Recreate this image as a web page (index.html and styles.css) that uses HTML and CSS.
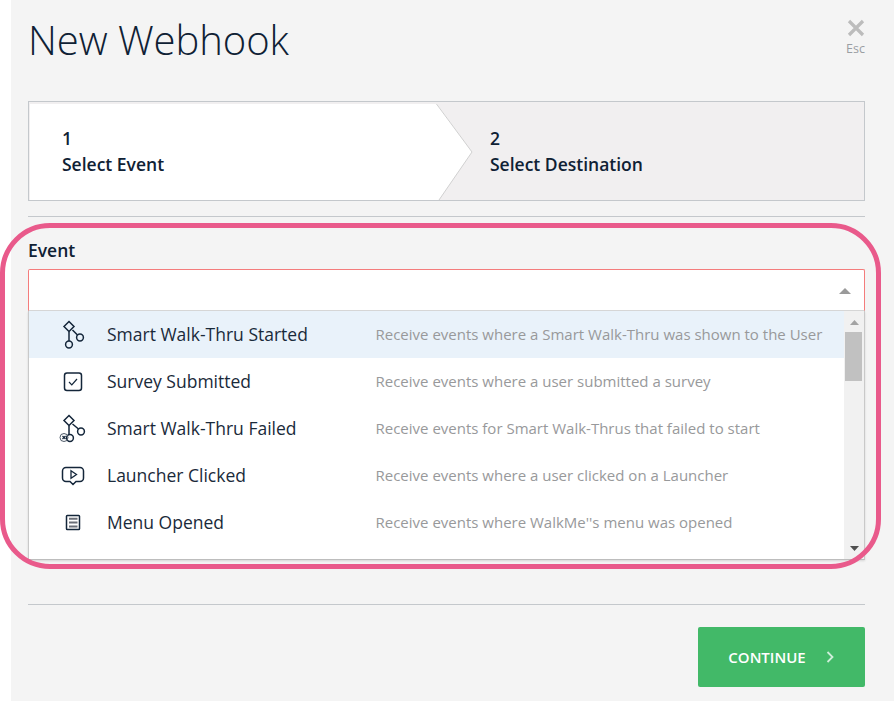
FILE: index.html
```html
<!DOCTYPE html>
<html lang="en">
<head>
<meta charset="utf-8">
<title>New Webhook</title>
<link rel="stylesheet" href="styles.css">
</head>
<body>
<main class="modal">
  <header class="head">
    <h1 class="title">New Webhook</h1>
    <button class="close" type="button">
      <svg class="close-x" width="18" height="18" viewBox="0 0 18 18"><path d="M2 2 16 16M16 2 2 16"/></svg>
      <span class="esc">Esc</span>
    </button>
  </header>

  <div class="stepper">
    <div class="step step-active"><span>1</span><span>Select Event</span></div>
    <svg class="chevron" width="38" height="96" viewBox="0 0 38 96" preserveAspectRatio="none"><path class="chev-fill" d="M0 0H1L36 48 3 96H0Z"/><path class="chev-line" d="M.5 0 36 48 3 96"/></svg>
    <div class="step step-next"><span>2</span><span>Select Destination</span></div>
  </div>

  <hr class="rule rule-top">

  <label class="field-label">Event</label>
  <div class="select">
    <svg class="caret" width="12" height="6" viewBox="0 0 12 6"><path d="M6 0 12 6H0Z"/></svg>
  </div>

  <div class="list">
    <ul class="rows">
      <li class="row row-hover">
        <svg class="icon" width="24" height="28" viewBox="0 0 24 28"><path d="M8 10.500V20M11.500 9 16.500 14"/><path d="M8 .5 13 5.500 8 10.500 3 5.500Z"/><circle cx="19" cy="16.500" r="3.400"/><circle cx="8" cy="23.500" r="3.400"/></svg>
        <span class="name">Smart Walk-Thru Started</span>
        <span class="desc">Receive events where a Smart Walk-Thru was shown to the User</span>
      </li>
      <li class="row">
        <svg class="icon" width="24" height="28" viewBox="0 0 24 28"><rect x="3.500" y="5" width="17" height="17.500" rx="2.500"/><path class="thin" d="M8 14 10.800 16.800 16 11"/></svg>
        <span class="name">Survey Submitted</span>
        <span class="desc">Receive events where a user submitted a survey</span>
      </li>
      <li class="row">
        <svg class="icon" width="24" height="28" viewBox="0 0 24 28"><path d="M8 10.500V20M11.500 9 17.500 14"/><path d="M8 .5 13 5.500 8 10.500 3 5.500Z"/><circle cx="20" cy="16.500" r="3.400"/><circle cx="9" cy="23" r="3.400"/><circle class="soft" cx="3" cy="22.500" r="4"/><path class="thin" d="M1.500 21 4.500 24M4.500 21 1.500 24"/></svg>
        <span class="name">Smart Walk-Thru Failed</span>
        <span class="desc">Receive events for Smart Walk-Thrus that failed to start</span>
      </li>
      <li class="row">
        <svg class="icon" width="24" height="28" viewBox="0 0 24 28"><path d="M5 5.500H19A3.500 3.500 0 0 1 22.500 9V16A3.500 3.500 0 0 1 19 19.500H15L12 22.500 9 19.500H5A3.500 3.500 0 0 1 1.500 16V9A3.500 3.500 0 0 1 5 5.500Z"/><path class="tri" d="M10 8.800 15.500 12.500 10 16.200Z"/></svg>
        <span class="name">Launcher Clicked</span>
        <span class="desc">Receive events where a user clicked on a Launcher</span>
      </li>
      <li class="row">
        <svg class="icon" width="24" height="28" viewBox="0 0 24 28"><rect x="5.500" y="6.500" width="13" height="14" rx=".8"/><path class="lines" d="M8 9.800H16.500M8 13.500H16.500M8 17.500H16.500"/></svg>
        <span class="name">Menu Opened</span>
        <span class="desc">Receive events where WalkMe''s menu was opened</span>
      </li>
    </ul>
    <div class="scrollbar">
      <svg class="sb-arrow" width="9" height="5" viewBox="0 0 9 5"><path d="M4.500 0 9 5H0Z"/></svg>
      <div class="sb-thumb"></div>
      <svg class="sb-arrow sb-down" width="9" height="5" viewBox="0 0 9 5"><path d="M0 0H9L4.500 5Z"/></svg>
    </div>
  </div>

  <hr class="rule rule-bottom">

  <div class="actions">
    <button class="continue" type="button">CONTINUE
      <svg width="9" height="12" viewBox="0 0 9 12"><path d="M1.500 1 6.500 6 1.500 11"/></svg>
    </button>
  </div>
</main>
<div class="highlight"></div>
</body>
</html>
```

FILE: styles.css
```css
* { box-sizing: border-box; }
html, body { margin: 0; height: 100%; }
body {
  background: #fff;
  padding-left: 11px;
  font-family: "Open Sans", sans-serif;
  color: #0f2134;
  overflow: hidden;
}
.modal {
  background: #f4f4f4;
  height: 701px;
  padding: 0 29px 0 17px;
}
.head {
  height: 101px;
  display: flex;
  justify-content: space-between;
  align-items: flex-start;
}
.title {
  margin: 12px 0 0;
  font-size: 40px;
  font-weight: 300;
  line-height: 56px;
  letter-spacing: -.05px;
}
.close {
  margin: 19px 0 0;
  padding: 0;
  border: 0;
  background: none;
  display: flex;
  flex-direction: column;
  align-items: center;
  font-family: inherit;
}
.close-x path { stroke: #bcbcbc; stroke-width: 3.200; fill: none; }
.esc { font-size: 12.500px; line-height: 16px; color: #9a9ea3; margin-top: 4px; }

.stepper {
  height: 100px;
  display: flex;
  border: 1px solid #c4c8cc;
  background: #f1eff0;
  font-size: 17.500px;
  font-weight: 580;
  line-height: 26px;
}
.step {
  display: flex;
  flex-direction: column;
  justify-content: center;
}
.step-active {
  width: 406px;
  padding: 0 0 2px 32px;
  background: #fff;
  margin: 2px 0 0 1px;
  height: 96px;
}
.chevron { flex: none; margin-top: 2px; height: 96px; }
.chev-fill { fill: #fff; }
.chev-line { fill: none; stroke: #d0d0d0; stroke-width: 1; }
.step-next { padding-left: 16px; }

.rule { border: 0; height: 1px; margin: 0; background: #c4c8cc; }
.rule-top { margin-top: 15px; }
.rule-bottom { margin-top: 44px; }

.field-label {
  display: block;
  font-size: 17.500px;
  font-weight: 580;
  line-height: 22px;
  margin-top: 22px;
}
.select {
  height: 42px;
  margin-top: 8px;
  background: #fff;
  border: 1px solid #f47c7c;
  border-bottom-color: #d8d8d8;
  border-radius: 2px 2px 0 0;
  display: flex;
  justify-content: flex-end;
  align-items: center;
  padding: 2px 13px 0 0;
}
.caret path { fill: #9a9a9a; }

.list {
  height: 249px;
  display: flex;
  background: #fff;
  border: 1px solid #c9c9c9;
  border-top: 0;
  border-bottom-color: #bdbdbd;
  box-shadow: 0 1px 2px rgba(0, 0, 0, .12);
}
.rows { flex: 1; list-style: none; margin: 0; padding: 0; min-width: 0; }
.row {
  height: 47px;
  display: flex;
  align-items: center;
  padding-left: 32px;
}
.row-hover { background: #e9f2fa; }
.icon { flex: none; width: 24px; height: 28px; margin-right: 22px; overflow: visible; }
.icon path, .icon rect, .icon circle { fill: none; stroke: #14263a; stroke-width: 1.500; }
.icon .thin { stroke-width: 1.200; }
.icon .tri { stroke-width: 1.300; }
.icon .soft { stroke: #4e5a68; stroke-width: 1; }
.icon .lines { stroke: #6b6f78; stroke-width: 2; }
.name { width: 269px; flex: none; margin-bottom: 2px; font-size: 17.500px; line-height: 24px; color: #1a2a3a; }
.desc { margin: 0 0 2px -.5px; font-size: 15px; color: #98999b; white-space: nowrap; }

.scrollbar {
  width: 20px;
  flex: none;
  background: #f1f1f1;
  display: flex;
  flex-direction: column;
  align-items: center;
}
.sb-arrow { margin-top: 9px; flex: none; }
.sb-arrow path { fill: #a3a3a3; }
.sb-thumb { width: 17px; height: 49px; background: #c1c1c1; margin: 7px 1px 0 0; }
.sb-down { margin-top: auto; margin-bottom: 8px; }
.sb-down path { fill: #505050; }

.actions { display: flex; justify-content: flex-end; margin-top: 22px; }
.continue {
  width: 167px;
  height: 60px;
  border: 0;
  border-radius: 2px;
  background: #42b968;
  color: #fff;
  font-family: inherit;
  font-size: 15px;
  font-weight: 650;
  display: flex;
  align-items: center;
  justify-content: center;
  gap: 20px;
}
.continue svg path { fill: none; stroke: #cfeeda; stroke-width: 1.800; }

.highlight {
  position: absolute;
  left: 0;
  top: 223px;
  width: 881px;
  height: 346px;
  border: 5px solid #e95a8b;
  border-radius: 50px;
  pointer-events: none;
}
```
